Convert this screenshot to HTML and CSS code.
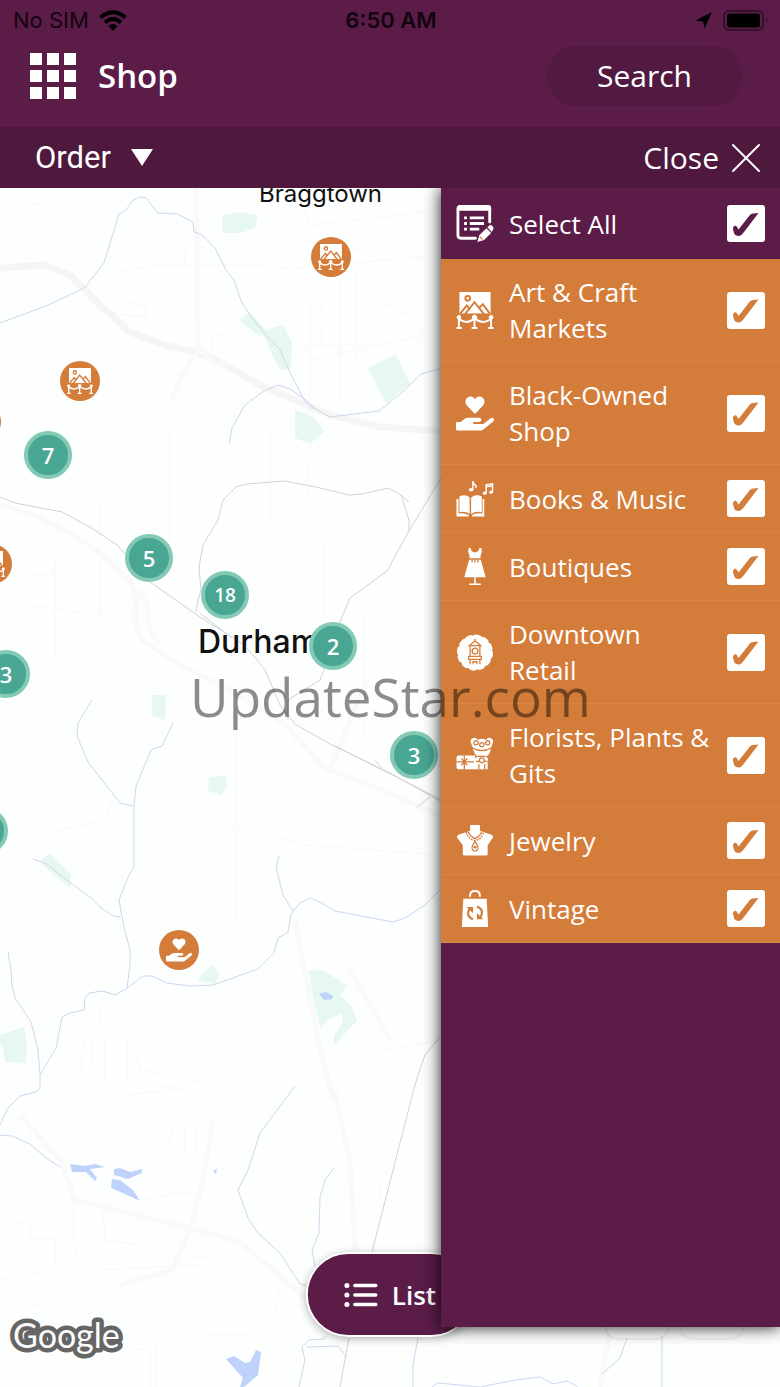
FILE: index.html
```html
<!DOCTYPE html>
<html lang="en">

<head>
    <meta charset="UTF-8">
    <meta name="viewport" content="width=device-width, initial-scale=1.0">
    <title>Shop</title>
    <link rel="stylesheet" href="styles.css">
</head>

<body>
    <!-- shared icons -->
    <svg class="sprite" aria-hidden="true">
        <symbol id="i-select" viewBox="0 0 39 39">
            <path fill="none" stroke="#fff" stroke-width="3" stroke-linecap="round" d="M20 35H4.500Q1.500 35 1.500 32V4Q1.500 1.500 4.500 1.500H32Q35 1.500 35 4V18" />
            <path fill="#fff" d="M1 6V3Q1 0 4 0H33Q36.500 0 36.500 3V6ZM8 12h3v3H8zM14 12h15v3H14zM8 18h3v3H8zM14 18h15v3H14zM8 24h3v3H8zM14 24h10v3H14z" />
            <path fill="#fff" d="M22 39L24 32L31.500 24.500L36.500 29.500L29 37ZM32.500 23.500L34.500 21.500Q36 20.500 37.500 22L38.500 23Q39.500 24.500 38.500 26L37 28.500Z" />
            <path class="line" d="M24.500 33.500L27.500 36.500" />
        </symbol>
        <symbol id="i-art" viewBox="0 0 38 38">
            <path fill="#fff" d="M3 0H35V22H3Z" />
            <circle class="line bold" cx="11.500" cy="6.500" r="2.400" />
            <path class="line bold" d="M4 22L10.500 14L14 18M8.500 23L18.500 10.500L28.500 23M23.500 16L27 12.500L34 22" />
            <path fill="none" stroke="#fff" stroke-width="2" d="M2.500 27V36M18.500 27V36M35.500 27V36M0 37H5.500M15.500 37H21.500M32.500 37H38M3 28Q11 34 18.500 27Q27 34 35 28" />
            <g fill="#fff">
                <circle cx="2.500" cy="26" r="2.300" />
                <circle cx="18.500" cy="26" r="2.600" />
                <circle cx="35.500" cy="26" r="2.300" />
            </g>
        </symbol>
        <symbol id="i-heart" viewBox="0 0 576 512">
            <path fill="#fff" d="M275.300 250.500c7 7.400 18.400 7.400 25.500 0l108.900-114.200c31.600-33.200 29.800-88.200-5.600-118.800-30.800-26.700-76.700-21.900-104.900 7.700L288 36.900l-11.100-11.600C248.700-4.400 202.800-9.200 172 17.500c-35.300 30.600-37.200 85.600-5.600 118.800l108.900 114.200zm290 77.600c-11.800-10.700-30.200-10-42.600 0L430.300 402c-11.300 9.100-25.400 14-40 14H272c-8.800 0-16-7.200-16-16s7.200-16 16-16h78.300c15.900 0 30.700-10.900 33.300-26.600 3.300-20-12.100-37.400-31.600-37.400H192c-27 0-53.100 9.300-74.100 26.300L71.400 384H16c-8.800 0-16 7.200-16 16v96c0 8.800 7.200 16 16 16h356.800c14.500 0 28.600-4.900 40-14L564 377c15.200-12.100 16.400-35.300 1.300-48.900z" />
        </symbol>
        <symbol id="i-books" viewBox="0 0 38 38">
            <path fill="#fff" d="M3 17Q9 14 13.500 18V35Q9 31.500 3 33ZM15 18Q20 14 26 17V33Q20 31.500 15 35Z" />
            <path fill="#fff" d="M0 19.500H2V34.500Q8 33.500 12.500 36V37.500H0ZM28.500 19.500H26.800V34.500Q20 33.500 16 36V37.500H28.500Z" />
            <path fill="none" stroke="#fff" stroke-width="1.500" d="M16.800 10V1Q17 4 20 6Q20.500 7 19.500 8M30.500 13V5L37 4V12M30.500 7L37 6" />
            <g fill="#fff">
                <ellipse cx="15" cy="10" rx="2.400" ry="1.800" />
                <ellipse cx="29" cy="13.500" rx="2" ry="1.600" />
                <ellipse cx="35.500" cy="12.500" rx="2" ry="1.600" />
            </g>
        </symbol>
        <symbol id="i-dress" viewBox="0 0 38 38">
            <path fill="#fff" d="M12.500 0H14.500Q15 4.500 19 4.500Q23 4.500 23.500 0H25.500L26 4Q24.500 7 24.500 10.500H13.500Q13.500 7 12 4ZM13 12H25L30 30H8Z" />
            <path class="line" d="M16 12V15M19 12V15M22 12V15" />
            <path fill="none" stroke="#fff" stroke-width="1.600" d="M19 30V37M13 37.200H25" />
        </symbol>
        <symbol id="i-downtown" viewBox="0 0 38 38">
            <circle cx="19" cy="19" r="17.500" fill="#fff" />
            <circle cx="19" cy="19" r="16.500" fill="none" stroke="#fff" stroke-width="4" stroke-linecap="round" stroke-dasharray="4 4.640" />
            <path class="line" d="M19 5V7M13 12L19 7L25 12ZM14 12V23M24 12V23M12.500 23H25.500V26H12.500ZM14 26V31M24 26V31M17 31V28.500H21V31" />
            <circle class="line" cx="19" cy="17.500" r="3" />
        </symbol>
        <symbol id="i-florist" viewBox="0 0 38 38">
            <path fill="#fff" d="M14.500 5Q14 2 17 1Q20 0 22 3Q26 .500 30 3Q32 0 35 1Q38 2 37.500 5L35 13Q34 19 30 20Q34 22 32 26L32 33H19V26Q18 21 22 20Q18 18 17 12Z" />
            <path fill="#fff" d="M2 19H19V33H2Q0 33 0 31V21Q0 19 2 19Z" />
            <path class="line" d="M0 25.500H18M8 19V33M5 22L11 29M11 22L5 29M16 11Q26 17 36 11M22 20H30M20 25H24M28 25H32M23 33V28M29 33V28" />
            <g class="line">
                <circle cx="20" cy="6" r="2.200" />
                <circle cx="26" cy="8" r="2.200" />
                <circle cx="32" cy="6" r="2.200" />
                <circle cx="26" cy="24" r="2.500" />
            </g>
        </symbol>
        <symbol id="i-jewelry" viewBox="0 0 38 38">
            <path fill="#fff" d="M14 3H24V9L36 13Q38 14 37.500 16L32 24V33Q32 34.500 30 34.500H8Q6.500 34.500 6.500 33V24L.500 16Q0 14 2 13L14 9Z" />
            <path class="line" stroke-dasharray="2 1" d="M10 10Q12 18 19 19Q26 18 28 10" />
            <path class="line" d="M12 10Q14 15 19 17Q24 15 26 10M19 20Q14 27 17 29Q19 30.500 21 29Q24 27 19 20Z" />
            <circle cx="19" cy="26" r="1.500" fill="#d47c3a" />
        </symbol>
        <symbol id="i-vintage" viewBox="0 0 38 38">
            <path fill="none" stroke="#fff" stroke-width="2" d="M14 7V5.500Q14 1 19 1Q24 1 24 5.500V7" />
            <path fill="#fff" d="M7 9H31L32.500 38H5.500Z" />
            <path fill="none" stroke="#d47c3a" stroke-width="2.200" d="M17 30Q9 27 13.500 19M21 17Q29 20 24.500 28" />
            <path fill="#d47c3a" d="M10.500 17.500H17V24ZM27.500 30H21V23.500Z" />
        </symbol>
    </svg>

    <header class="header">
        <div class="status">
            <div class="status-left">
                <span>No SIM</span>
                <svg width="28" height="21" viewBox="0 0 28 21" fill="none" stroke="#000" stroke-width="4">
                    <path d="M1.500 7.500Q14-3 26.500 7.500M6 12.500Q14 5.500 22 12.500" />
                    <path fill="#000" stroke="none" d="M9.500 16Q14 12 18.500 16L14 21Z" />
                </svg>
            </div>
            <span class="time">6:50 AM</span>
            <div class="status-right">
                <svg width="18" height="17" viewBox="0 0 18 17">
                    <path d="M17 0L9.500 16.500L8 9.500L.500 8.500Z" />
                </svg>
                <svg width="46" height="21" viewBox="0 0 46 21">
                    <rect x="1" y="1" width="39" height="19" rx="5" fill="none" stroke="#35102a" stroke-width="2" />
                    <rect x="4" y="3.500" width="33" height="14" rx="3" />
                    <path fill="#35102a" d="M43 7Q46 10.500 43 14Z" />
                </svg>
            </div>
        </div>
        <div class="appbar">
            <button class="menu" type="button" aria-label="Menu">
                <i></i><i></i><i></i>
                <i></i><i></i><i></i>
                <i></i><i></i><i></i>
            </button>
            <h1>Shop</h1>
            <button class="search" type="button">Search</button>
        </div>
        <div class="toolbar">
            <label class="order">
                <select aria-label="Order">
                    <option>Order</option>
                </select>
                <span class="caret"></span>
            </label>
            <button class="close" type="button">
                Close
                <svg width="30" height="30" viewBox="0 0 30 30" stroke="#fff" stroke-width="2" stroke-linecap="round">
                    <path d="M2 2L28 28M28 2L2 28" />
                </svg>
            </button>
        </div>
    </header>

    <main class="map">
        <svg class="tiles" viewBox="0 188 780 1199" preserveAspectRatio="xMinYMin slice" fill="none" aria-hidden="true">
            <g class="parks">
                <path d="M222 215L240 212L258 215L255 228L240 233L223 233ZM239 320L250 313L266 330L283 325L292 343L291 368L281 371L272 355L265 337L255 333ZM368 368L396 354L410 384L386 404ZM295 410L312 416L325 431L310 444L295 438ZM152 695H166L165 720L152 716ZM209 778L226 775L227 788L221 795L208 791ZM40 862L49 853L71 875L70 888L55 876ZM197 980L211 965L220 973L215 984ZM0 1035L24 1027L27 1045L26 1063L5 1062L3 1048L0 1045ZM309 970L325 971L347 986L340 995L352 1007L357 1021L334 1045L334 1036L343 1022L342 1014L330 1018L320 1028L312 992Z" />
            </g>
            <g class="streets">
                <path d="M0 218L25 205L45 203M0 240L8 252M20 238H45M125 300L112 318M120 272L160 265L260 265L290 269L440 255M185 265V248H205M125 302L147 306L145 317L120 314M145 302H200M300 195L310 225L400 215L440 208M300 240L360 250L400 235M268 292L280 305V345M295 285L310 300L309 500M322 300V350M340 280V400M355 270V360M375 310L415 295V310L378 320M280 320H340M300 345L370 345M310 360L425 335M200 320H230V335H212V360M0 395H200M20 540L60 530M28 575H60M55 560V660M100 500V620M170 430V560M270 430V520M325 540V640M365 610V740M130 618H230M140 655H155M28 605L80 612H200" />
                <path d="M35 840L60 830L105 820L112 800M185 828H240M270 835L305 845L440 855M237 700V920M100 1010L98 1035M80 1070L85 1037H93V1068M105 1080V1035H127V1085M137 1055L145 1043H170L180 1060L170 1075L140 1070ZM140 1080L165 1088L205 1080M385 1050L440 1040M100 1118L125 1095L190 1088M170 1125L200 1120L212 1115M175 1125L165 1150M185 1125V1155M195 1122V1158M160 1158H205M145 1200L180 1192L195 1195M73 1210L75 1255L100 1270L200 1265M103 1212L105 1240L140 1245M155 1228L130 1210M185 1257H210M0 1228L30 1220V1240L55 1238V1270L0 1280M200 1275V1335H250M155 1340V1387M0 1310L40 1305L50 1290M60 1345L150 1350V1387M160 1365H230M370 1180H380V1200H360M275 1310L280 1290L300 1280" />
            </g>
            <g class="roads">
                <path class="highway" d="M0 268L45 265L70 275L100 305L130 332L165 345L195 352L220 362L260 385L330 415L380 427L440 431" />
                <path d="M196 188L198 350M180 380Q190 360 200 348Q215 370 225 362M172 400L182 375M0 505L40 517L90 545L130 580L137 600Q132 620 142 640L180 665L230 690L285 725L325 768L370 785L440 815M137 590L148 605Q145 630 160 645M330 770L340 745L367 680" />
                <path d="M20 1115L60 1160L75 1200L190 1228L240 1242L305 1297M213 1120L205 1170L190 1230L172 1270L120 1285M334 1090L350 1160L355 1250M295 920L320 1050L334 1100M350 970L390 1040M612 1320L600 1387" />
            </g>
            <g class="streams">
                <path d="M0 323L46 306L78 291L85 287L104 263L119 214L126 210L133 200L140 197L146 198L158 213L177 214L193 222L194 232L201 234L215 248L226 270L234 280L241 301L250 315L265 334L280 350L292 377L306 403L314 409" />
                <path d="M229 444L232 428L245 405L264 391L278 385L290 389L306 400L314 408L330 417L379 411L404 391L421 374L440 369" />
                <path d="M92 700L78 723L77 736L88 762L120 803L134 806M173 723L162 746L151 750L136 786L134 806V867L129 875L119 900L124 927L130 950V965L127 988M33 859L47 864L60 875L76 887L90 897L100 907L113 916L121 917" />
                <path d="M0 1125L8 1108L20 1096L36 1092L40 1088V1075L56 1048L62 1017L70 1013L84 1010L85 998L89 993L103 991L115 995L126 989L143 976L152 976L167 983L190 986L213 985L258 969L274 953L278 938L288 932L291 914L300 903L310 898L320 902L335 911L372 918L393 922L405 918L425 905L440 890M279 856L276 867L283 895L293 911M8 952L11 970L12 985L15 998L31 1022L38 1050L40 1074" />
                <path d="M0 1135L12 1136L30 1144L46 1158L60 1167M295 1086L260 1133L248 1170L238 1190L248 1218L257 1232L280 1253L300 1284L308 1286M334 1168L325 1180L320 1197L319 1233L312 1250L315 1266M325 1336L324 1339L309 1340L302 1347L305 1360L299 1387M307 1347L338 1346L347 1357M418 1338L413 1365V1387M432 1387L438 1383L480 1387L515 1380L540 1377L553 1384L567 1381L578 1387M627 1338L620 1358L602 1374M662 1330V1387" />
            </g>
            <g class="rails">
                <path d="M0 497L15 503L62 512L90 527L117 545L150 582L200 617L240 642L253 655L265 670L280 705L295 724L330 744L390 773L440 801M200 613L232 638M335 746L440 799" />
                <path d="M196 612L198 600L201 590L199 567L203 545L218 520L223 500L236 487L247 484L284 481L316 487L349 495L362 494L388 488L401 495L409 502M401 495L409 520V531M441 478L409 531L387 571L350 598L340 622L333 645L320 680L307 688L288 700V720" />
                <path d="M440 1037L425 1055L418 1075L411 1100L372 1252M349 1338L340 1387M375 760L382 768M417 807L430 797" />
            </g>
            <g class="water">
                <path d="M70 1164L85 1166L95 1164L105 1167L90 1169L97 1178L95 1181L86 1172L72 1172ZM114 1169L120 1168L130 1172L142 1169V1173L128 1179L114 1175ZM112 1179L120 1180L133 1190L140 1201L125 1194L111 1188ZM226 1359L234 1356L245 1363L250 1362L256 1350L261 1352L258 1375L244 1387H240L243 1378ZM319 994L326 992L333 996L332 999L324 1000ZM213 1171L217 1169L216 1174Z" />
            </g>
        </svg>

        <span class="place braggtown">Braggtown</span>
        <span class="place durham">Durham</span>

        <div class="pin pin-1"><svg><use href="#i-art" /></svg></div>
        <div class="pin pin-2"><svg><use href="#i-art" /></svg></div>
        <div class="pin pin-3"><svg><use href="#i-art" /></svg></div>
        <div class="pin pin-4"><svg><use href="#i-art" /></svg></div>
        <div class="pin pin-5"><svg><use href="#i-heart" /></svg></div>

        <div class="cluster cluster-1">7</div>
        <div class="cluster cluster-2">5</div>
        <div class="cluster small cluster-3">18</div>
        <div class="cluster cluster-4">2</div>
        <div class="cluster cluster-5">3</div>
        <div class="cluster cluster-6">3</div>
        <div class="cluster cluster-7"></div>

        <a class="google" href="#">
            <svg width="112" height="44" viewBox="0 0 112 44">
                <text x="3" y="31">Google</text>
            </svg>
        </a>

        <button class="list" type="button">
            <svg width="34" height="26" viewBox="0 0 34 26" stroke="#fff" stroke-linecap="round">
                <path d="M3 3.500H3.100M3 13H3.100M3 22.500H3.100" stroke-width="5" />
                <path d="M11 3.500H32M11 13H32M11 22.500H32" stroke-width="3.500" />
            </svg>
            List
        </button>
        <div class="controls">
            <button type="button" aria-label="Zoom out"></button>
            <button type="button" aria-label="Zoom in"></button>
        </div>

        <aside class="panel">
            <label class="row all">
                <svg><use href="#i-select" /></svg>
                <span>Select All</span>
                <input type="checkbox" checked>
            </label>
            <label class="row">
                <svg><use href="#i-art" /></svg>
                <span>Art &amp; Craft Markets</span>
                <input type="checkbox" checked>
            </label>
            <label class="row">
                <svg><use href="#i-heart" /></svg>
                <span>Black-Owned Shop</span>
                <input type="checkbox" checked>
            </label>
            <label class="row">
                <svg><use href="#i-books" /></svg>
                <span>Books &amp; Music</span>
                <input type="checkbox" checked>
            </label>
            <label class="row">
                <svg><use href="#i-dress" /></svg>
                <span>Boutiques</span>
                <input type="checkbox" checked>
            </label>
            <label class="row">
                <svg><use href="#i-downtown" /></svg>
                <span>Downtown Retail</span>
                <input type="checkbox" checked>
            </label>
            <label class="row">
                <svg><use href="#i-florist" /></svg>
                <span>Florists, Plants &amp; Gits</span>
                <input type="checkbox" checked>
            </label>
            <label class="row">
                <svg><use href="#i-jewelry" /></svg>
                <span>Jewelry</span>
                <input type="checkbox" checked>
            </label>
            <label class="row">
                <svg><use href="#i-vintage" /></svg>
                <span>Vintage</span>
                <input type="checkbox" checked>
            </label>
        </aside>

        <div class="watermark">UpdateStar.com</div>
    </main>
</body>

</html>
```

FILE: styles.css
```css
* {
    box-sizing: border-box;
}

body {
    margin: 0;
    min-height: 100vh;
    display: flex;
    flex-direction: column;
    font-family: "Open Sans", sans-serif;
    color: #fff;
}

button,
select {
    border: 0;
    padding: 0;
    background: none;
    color: inherit;
    font-family: inherit;
    cursor: pointer;
}

.sprite {
    position: absolute;
    width: 0;
    height: 0;
}

.line {
    fill: none;
    stroke: #d47c3a;
    stroke-width: 1.3;
}

.line.bold {
    stroke-width: 2;
}

/* header */
.header {
    background-color: #5b1c48;
}

.status {
    display: grid;
    grid-template-columns: 1fr auto 1fr;
    align-items: center;
    height: 40px;
    padding: 0 11px 0 13px;
    color: #12040e;
    font-family: Inter, sans-serif;
    font-size: 22px;
}

.status-left,
.status-right {
    display: flex;
    align-items: center;
    gap: 10px;
}

.status-right {
    justify-content: flex-end;
}

.time {
    font-weight: 600;
}

.appbar {
    display: flex;
    align-items: center;
    padding: 6px 38px 21px 30px;
}

.menu {
    display: grid;
    grid-template-columns: repeat(3, 12px);
    gap: 5px;
}

.menu i {
    height: 12px;
    background-color: #fff;
}

h1 {
    flex: 1;
    margin: 0 0 0 22px;
    font-size: 33px;
    line-height: 60px;
    font-weight: 600;
}

.search {
    width: 195px;
    height: 60px;
    border-radius: 30px;
    background-color: #521941;
    font-size: 30px;
    line-height: 58px;
}

.toolbar {
    display: flex;
    justify-content: space-between;
    align-items: center;
    height: 61px;
    padding: 0 19px 0 35px;
    background-color: #4f183d;
}

.order {
    display: flex;
    align-items: center;
    gap: 20px;
}

.order select {
    appearance: none;
    font-family: Roboto, sans-serif;
    font-size: 31px;
}

.caret {
    border: 11px solid transparent;
    border-top: 17px solid #fff;
    border-bottom: 0;
}

.close {
    display: flex;
    align-items: center;
    gap: 12px;
    font-size: 30px;
}

/* map */
.map {
    flex: 1;
    position: relative;
    min-height: 900px;
    overflow: hidden;
    background-color: #fdfefe;
}

.tiles {
    position: absolute;
    width: 100%;
    height: 100%;
}

.parks {
    fill: #e6f8f0;
}

.water {
    fill: #bed2fb;
}

.streets {
    stroke: #f8f8f9;
}

.roads {
    stroke: #f9f9f9;
    stroke-width: 5;
}

.highway {
    stroke: #f5f5f5;
    stroke-width: 7;
}

.streams {
    stroke: #d0d5f0;
}

.rails {
    stroke: #d2d2d4;
}

.place {
    position: absolute;
    color: #111;
    font-family: Inter, sans-serif;
}

.braggtown {
    left: 259px;
    top: -9px;
    font-size: 24px;
    line-height: 30px;
}

.durham {
    left: 198px;
    top: 434px;
    font-size: 32px;
    line-height: 40px;
    font-weight: 500;
}

.pin,
.cluster {
    position: absolute;
    display: flex;
    justify-content: center;
    align-items: center;
    border-radius: 50%;
}

.pin {
    width: 40px;
    height: 40px;
    background-color: #d47c3a;
}

.pin svg {
    width: 26px;
    height: 26px;
}

.pin-1 { left: 311px; top: 49px; }
.pin-2 { left: 60px; top: 173px; }
.pin-3 { left: -39px; top: 214px; }
.pin-4 { left: -28px; top: 356px; }
.pin-5 { left: 159px; top: 742px; }

.cluster {
    width: 48px;
    height: 48px;
    border: 4px solid #82c9b6;
    background-color: #48a692;
    font-size: 22px;
    font-weight: 600;
}

.cluster.small {
    font-size: 19px;
}

.cluster-1 { left: 24px; top: 243px; }
.cluster-2 { left: 125px; top: 346px; }
.cluster-3 { left: 201px; top: 383px; }
.cluster-4 { left: 309px; top: 434px; }
.cluster-5 { left: -18px; top: 462px; }
.cluster-6 { left: 390px; top: 543px; }
.cluster-7 { left: -40px; top: 619px; }

.google {
    position: absolute;
    left: 10px;
    bottom: 26px;
}

.google svg {
    display: block;
    overflow: visible;
    fill: #fff;
    stroke: #666;
    stroke-width: 9px;
    stroke-linejoin: round;
    paint-order: stroke;
    font-family: Lato, sans-serif;
    font-size: 34px;
}

.list {
    position: absolute;
    left: 50%;
    bottom: 50px;
    transform: translateX(-50%);
    display: flex;
    align-items: center;
    gap: 14px;
    height: 85px;
    padding: 0 36px;
    border: 2px solid #fff;
    border-radius: 43px;
    background-color: #5b1c48;
    box-shadow: 0 2px 8px rgba(0, 0, 0, 0.3);
    font-size: 26px;
    font-weight: 600;
}

.controls {
    position: absolute;
    right: 37px;
    bottom: 49px;
    display: flex;
    gap: 13px;
}

.controls button {
    width: 62px;
    height: 62px;
    border-radius: 12px;
    background-color: #fff;
    box-shadow: 0 0 3px rgba(0, 0, 0, 0.2);
}

/* category panel */
.panel {
    position: absolute;
    top: 0;
    right: 0;
    bottom: 60px;
    width: 339px;
    max-width: 100%;
    background-color: #5b1c48;
    box-shadow: 0 0 16px rgba(0, 0, 0, 0.9);
}

.row {
    display: flex;
    align-items: center;
    gap: 15px;
    padding: 15px;
    border-bottom: 1px solid #da8648;
    background-color: #d47c3a;
    font-size: 26px;
    line-height: 36px;
    cursor: pointer;
}

.row.all {
    padding: 17px 15px;
    border: 0;
    background-color: #5b1c48;
}

.row.all .line {
    stroke: #5b1c48;
}

.row svg {
    flex: none;
    width: 38px;
    height: 37px;
}

.row span {
    flex: 1;
}

.row input {
    appearance: none;
    flex: none;
    width: 38px;
    height: 37px;
    margin: 0;
    border-radius: 3px;
    background-color: #fff;
    cursor: pointer;
}

.row input:checked::before {
    content: "";
    display: block;
    width: 38px;
    height: 37px;
    background-color: #d47c3a;
    clip-path: path("M6 24C5.500 21 9 19.500 10 22L11.500 24.500L22.500 10.500Q24 8.500 26 8.500L31.500 8L17 27Q14 31 12 31Q8 31 7 28Z");
}

.row.all input:checked::before {
    background-color: #5b1c48;
}

.watermark {
    position: absolute;
    left: 190px;
    top: 471px;
    color: rgba(0, 0, 0, 0.45);
    font-size: 53px;
    line-height: 76px;
    pointer-events: none;
}
```
